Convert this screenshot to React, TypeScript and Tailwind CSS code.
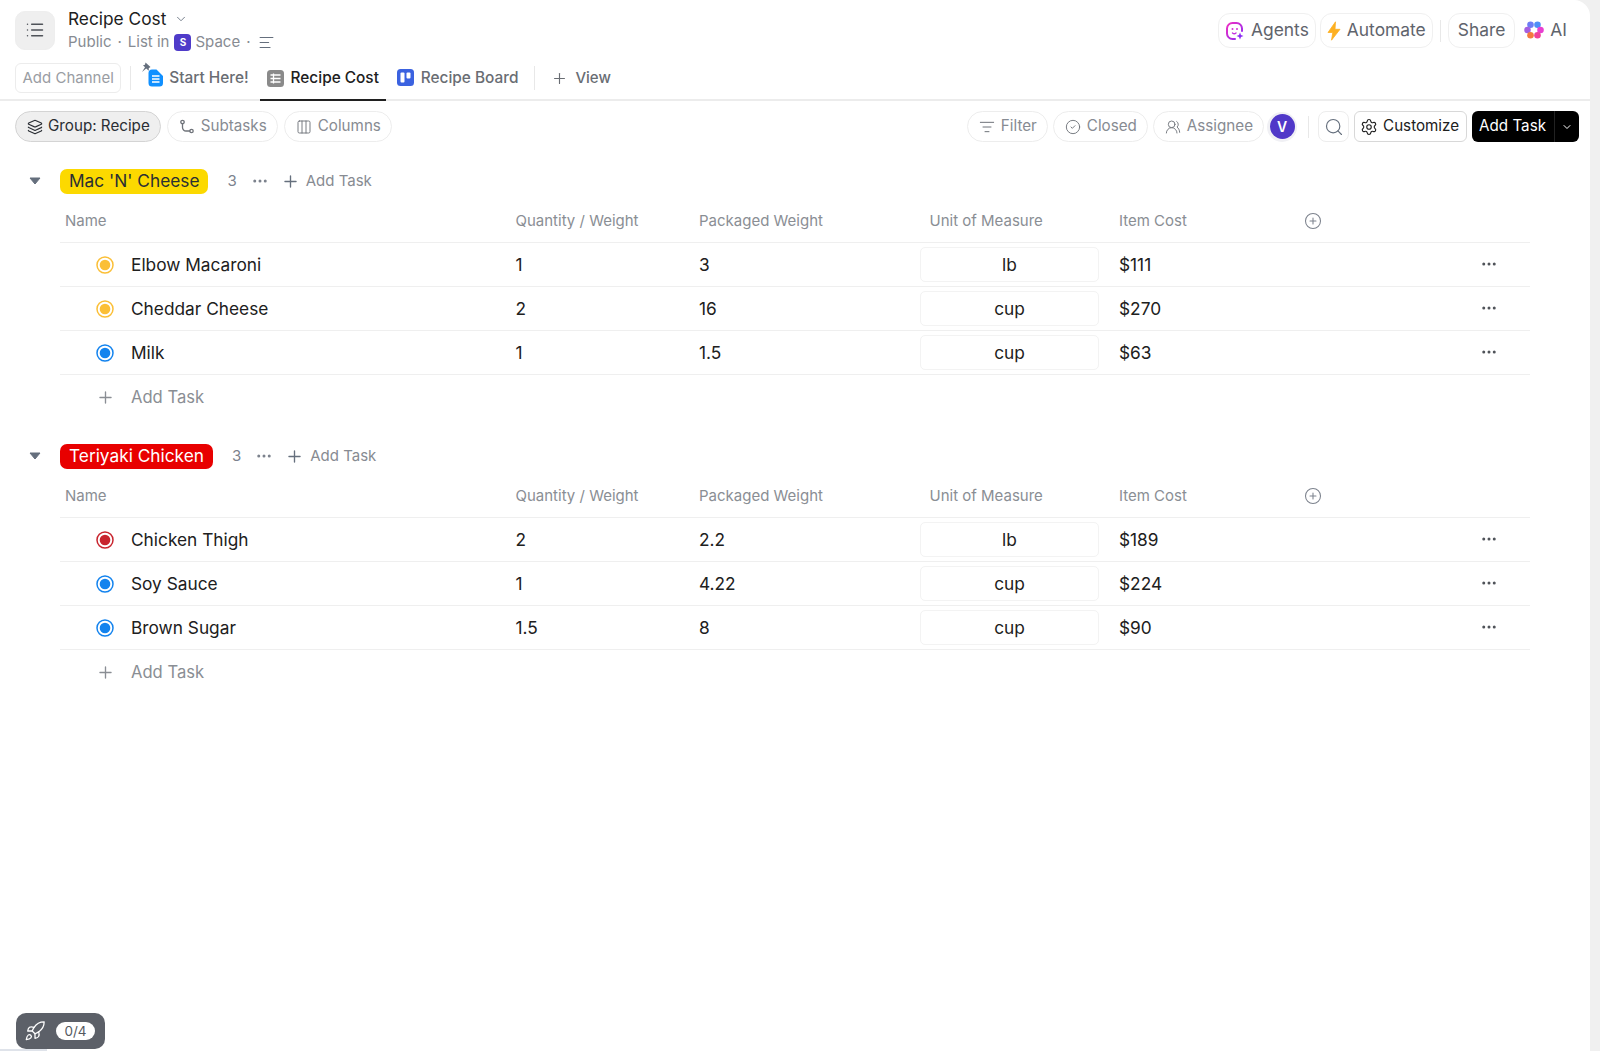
import {
  AlignLeft,
  ChevronDown,
  CircleCheck,
  CirclePlus,
  Columns3,
  Ellipsis,
  Layers,
  List,
  ListFilter,
  Plus,
  Rocket,
  Search,
  Settings,
  UsersRound,
} from 'lucide-react'

type Task = { name: string; color: string; qty: string; weight: string; unit: string; cost: string }

const YELLOW = '#fbbf37'
const BLUE = '#1383ee'
const RED = '#c8242e'

const groups: { name: string; pill: string; tasks: Task[] }[] = [
  {
    name: "Mac 'N' Cheese",
    pill: 'bg-[#fcd900] text-[#2a2e34]',
    tasks: [
      { name: 'Elbow Macaroni', color: YELLOW, qty: '1', weight: '3', unit: 'lb', cost: '$111' },
      { name: 'Cheddar Cheese', color: YELLOW, qty: '2', weight: '16', unit: 'cup', cost: '$270' },
      { name: 'Milk', color: BLUE, qty: '1', weight: '1.5', unit: 'cup', cost: '$63' },
    ],
  },
  {
    name: 'Teriyaki Chicken',
    pill: 'bg-[#e80000] text-white',
    tasks: [
      { name: 'Chicken Thigh', color: RED, qty: '2', weight: '2.2', unit: 'lb', cost: '$189' },
      { name: 'Soy Sauce', color: BLUE, qty: '1', weight: '4.22', unit: 'cup', cost: '$224' },
      { name: 'Brown Sugar', color: BLUE, qty: '1.5', weight: '8', unit: 'cup', cost: '$90' },
    ],
  },
]

function StatusDot({ color }: { color: string }) {
  return (
    <svg width="18" height="18" viewBox="0 0 18 18" className="shrink-0">
      <circle cx="9" cy="9" r="8" fill="none" stroke={color} strokeWidth="1.5" />
      <circle cx="9" cy="9" r="5.300" fill={color} />
    </svg>
  )
}

function AgentsIcon() {
  return (
    <svg width="20" height="20" viewBox="0 0 20 20" fill="none">
      <defs>
        <linearGradient id="agents" x1="0" y1="0" x2="1" y2="1">
          <stop offset="0" stopColor="#f02fc2" />
          <stop offset="1" stopColor="#8b2cf5" />
        </linearGradient>
      </defs>
      <path
        d="M10 18H7.500A5.500 5.500 0 0 1 2 12.500V7.500A5.500 5.500 0 0 1 7.500 2h4A5.500 5.500 0 0 1 17 7.500V10"
        stroke="url(#agents)"
        strokeWidth="2"
        strokeLinecap="round"
      />
      <circle cx="7.500" cy="8" r="1" fill="#d62fd8" />
      <circle cx="12" cy="8" r="1" fill="#d62fd8" />
      <path d="M7.500 12c1.200 1 2.300 1 3.500 0" stroke="#c42fe0" strokeWidth="1.400" strokeLinecap="round" />
      <path d="M15 11.500l1 2.500 2.500 1-2.500 1-1 2.500-1-2.500-2.500-1 2.500-1z" fill="#8b2cf5" />
    </svg>
  )
}

function BoltIcon() {
  return (
    <svg width="14" height="20" viewBox="0 0 14 20" className="shrink-0">
      <path d="M8.500 0.800L1 11.500h4.800L4.500 19.200 13 8.300H8z" fill="#fdb022" stroke="#fdb022" strokeWidth="0.800" strokeLinejoin="round" />
    </svg>
  )
}

function AiIcon() {
  return (
    <svg width="20" height="20" viewBox="0 0 20 20">
      <circle cx="6.500" cy="4.800" r="3.300" fill="#6d7cf5" />
      <circle cx="13.500" cy="4.800" r="3.300" fill="#4f8ef7" />
      <circle cx="3.500" cy="10" r="3.300" fill="#a45fe0" />
      <circle cx="16.500" cy="10" r="3.300" fill="#e83fd0" />
      <circle cx="6.500" cy="15.200" r="3.300" fill="#f5793f" />
      <circle cx="13.500" cy="15.200" r="3.300" fill="#f0409a" />
      <path d="M10 6.500l1 2.500 2.500 1-2.500 1-1 2.500-1-2.500-2.500-1 2.500-1z" fill="#fff" />
    </svg>
  )
}

function StartHereIcon() {
  return (
    <svg width="23" height="25" viewBox="0 0 23 25" className="mt-[-6px] shrink-0">
      <path d="M4.500 0.500l5 4.500-1.800 1.300.2 2.500-2.700-2.300L1 10l3-4.800L2 3.200l2-.4z" fill="#656f7d" />
      <path d="M7.500 11A3.500 3.500 0 0 1 11 7.500h4.500l6.500 6.500v7A3.500 3.500 0 0 1 18.500 24.500h-7.500A3.500 3.500 0 0 1 7.500 21z" fill="#1090ff" />
      <path d="M11 14h7.500M11 17h7.500M11 20h7.500" stroke="#fff" strokeWidth="1.600" />
    </svg>
  )
}

function TableIcon() {
  return (
    <svg width="17" height="17" viewBox="0 0 17 17" className="shrink-0">
      <rect width="17" height="17" rx="3.500" fill="#8a8a8a" />
      <path d="M3.500 5h10M3.500 8.500h10M3.500 12h10M6.500 3.500v10" stroke="#fff" strokeWidth="1.300" />
    </svg>
  )
}

function BoardIcon() {
  return (
    <svg width="17" height="17" viewBox="0 0 17 17" className="shrink-0">
      <rect width="17" height="17" rx="3.500" fill="#3b62e0" />
      <rect x="3.500" y="3.500" width="4" height="10" rx="1" fill="#fff" />
      <rect x="9.500" y="3.500" width="4" height="6" rx="1" fill="#fff" />
    </svg>
  )
}

function SubtasksIcon() {
  return (
    <svg width="16" height="16" viewBox="0 0 16 16" fill="none" stroke="currentColor" strokeWidth="1.300" className="shrink-0">
      <circle cx="3.500" cy="3" r="1.700" />
      <circle cx="12.500" cy="12" r="1.700" />
      <path d="M3.500 5v3.500A3.500 3.500 0 0 0 7 12h3.800" strokeLinecap="round" />
    </svg>
  )
}

function TopPill({ children }: { children: React.ReactNode }) {
  return (
    <div className="flex h-[35px] items-center gap-[6px] rounded-[12px] border border-[#f0f0f0] px-[6px] text-[17.4px] text-[#5f646c]">
      {children}
    </div>
  )
}

function ToolPill({ children, active }: { children: React.ReactNode; active?: boolean }) {
  return (
    <div
      className={
        active
          ? 'flex h-[31px] items-center gap-[5px] rounded-full border border-[#d4d4d4] bg-[#efefef] pl-[11px] pr-[10px] text-[15.2px] text-[#2a2e34]'
          : 'flex h-[31px] items-center gap-[6px] rounded-full border border-[#ededed] pl-[11px] pr-[10px] text-[15.2px] text-[#878b92] [&_svg]:text-[#6f737a]'
      }
    >
      {children}
    </div>
  )
}

function ColumnHeader() {
  return (
    <div className="ml-[60px] mr-[60px] flex h-[39px] items-center pb-[3px] text-[15px] text-[#8a8e94]">
      <div className="w-[455.5px] pl-[5px]">Name</div>
      <div className="w-[183.5px]">Quantity / Weight</div>
      <div className="w-[230.5px]">Packaged Weight</div>
      <div className="w-[189.5px]">Unit of Measure</div>
      <div className="w-[185px]">Item Cost</div>
      <CirclePlus size={18} strokeWidth={1.4} className="text-[#7c828d]" />
    </div>
  )
}

function TaskRow({ task }: { task: Task }) {
  return (
    <div className="ml-[60px] mr-[60px] flex h-[44px] items-center border-t border-[#efefef] text-[17.3px] text-[#202020]">
      <div className="flex w-[455.5px] items-center gap-[17px] pl-[36px]">
        <StatusDot color={task.color} />
        <span>{task.name}</span>
      </div>
      <div className="w-[183.5px]">{task.qty}</div>
      <div className="w-[221px]">{task.weight}</div>
      <div className="flex h-[35px] w-[179px] items-center justify-center rounded-[5px] border border-[#f3f3f3]">{task.unit}</div>
      <div className="ml-[20px] flex-1">{task.cost}</div>
      <Ellipsis size={18} strokeWidth={2} className="mb-[1px] mr-[32px] text-[#4f5359]" />
    </div>
  )
}

function Group({ group }: { group: (typeof groups)[number] }) {
  return (
    <section className="mb-[23px]">
      <div className="flex h-[26px] items-center">
        <svg width="12" height="8" viewBox="0 0 12 8" className="ml-[29px] shrink-0">
          <path d="M1 1h10L6 7z" fill="#656f7d" stroke="#656f7d" strokeLinejoin="round" />
        </svg>
        <div className={`ml-[19px] flex h-[25px] items-center rounded-[7px] px-[9px] text-[17.3px] ${group.pill}`}>{group.name}</div>
        <span className="ml-[19px] text-[15px] text-[#7c828d]">3</span>
        <Ellipsis size={18} strokeWidth={2} className="ml-[14px] text-[#7c828d]" />
        <Plus size={19} strokeWidth={1.7} className="ml-[12px] text-[#656f7d]" />
        <span className="ml-[6px] text-[15px] text-[#878b92]">Add Task</span>
      </div>
      <div className="mt-[9px]">
        <ColumnHeader />
      </div>
      {group.tasks.map(t => (
        <TaskRow key={t.name} task={t} />
      ))}
      <div className="ml-[60px] mr-[60px] flex h-[46px] items-center border-t border-[#efefef] pl-[36px] text-[16.6px] text-[#8a8e94]">
        <Plus size={19} strokeWidth={1.7} className="shrink-0 text-[#8a8e94]" />
        <span className="ml-[16px]">Add Task</span>
      </div>
    </section>
  )
}

export default function App() {
  return (
    <div className="relative flex h-[1051px] w-[1600px] overflow-hidden bg-[#f0f0f0] font-['Inter',sans-serif]">
      <main className="h-full w-[1590px] rounded-tr-[16px] bg-white">
        <header className="flex h-[101px] border-b-2 border-[#ececec]">
          <div className="flex-1 pl-[15px]">
            <div className="flex h-[60px] items-center">
              <div className="flex h-[39px] w-[40px] items-center justify-center rounded-[10px] border border-[#eee] bg-[#efefef]">
                <List size={20} strokeWidth={1.8} className="text-[#4f5359]" />
              </div>
              <div className="ml-[13px] flex flex-col pt-[1px]">
                <div className="flex h-[22px] items-center gap-[8px] text-[17.3px] text-[#202020]">
                  Recipe Cost
                  <ChevronDown size={14} strokeWidth={1.5} className="text-[#656f7d]" />
                </div>
                <div className="mt-[1px] flex h-[22px] items-center text-[15px] text-[#878b92]">
                  Public
                  <span className="mx-[6px]">·</span>
                  List in
                  <span className="ml-[5px] flex h-[17px] w-[17px] items-center justify-center rounded-[4px] bg-[#4f3bc9] text-[10px] font-bold text-white">S</span>
                  <span className="ml-[4px]">Space</span>
                  <span className="ml-[6px] mr-[7px]">·</span>
                  <AlignLeft size={17} strokeWidth={1.6} className="text-[#656f7d]" />
                </div>
              </div>
            </div>
            <div className="flex h-[41px] items-center pb-[5px] text-[15.4px]">
              <div className="flex h-[30px] items-center rounded-[6px] border border-[#ececec] px-[6.500px] text-[15px] text-[#9a9da3]">Add Channel</div>
              <div className="ml-[9px] h-[24px] w-px bg-[#e8e8e8]" />
              <div className="ml-[10px] flex items-center gap-[5px] text-[#696d73]">
                <StartHereIcon />
                <span className="font-medium">Start Here!</span>
              </div>
              <div className="mb-[-5px] ml-[11px] flex h-[41px] w-[126px] items-center justify-center gap-[7px] border-b-2 border-[#202020] pb-[3px] font-medium text-[#202020]">
                <TableIcon />
                <span>Recipe Cost</span>
              </div>
              <div className="ml-[11px] flex items-center gap-[7px] font-medium text-[#696d73]">
                <BoardIcon />
                <span>Recipe Board</span>
              </div>
              <div className="ml-[16px] h-[24px] w-px bg-[#e8e8e8]" />
              <div className="ml-[16px] flex items-center gap-[7px] text-[15px] font-medium text-[#696d73]">
                <Plus size={17} strokeWidth={1.6} />
                <span>View</span>
              </div>
            </div>
          </div>
          <div className="flex h-[60px] items-center gap-[4px] pr-[23px] pt-[1px]">
            <TopPill>
              <AgentsIcon />
              Agents
            </TopPill>
            <TopPill>
              <BoltIcon />
              Automate
            </TopPill>
            <div className="mx-[3px] h-[22px] w-px bg-[#e8e8e8]" />
            <div className="flex h-[35px] items-center rounded-[12px] border border-[#f0f0f0] px-[9px] text-[17.4px] text-[#5f646c]">Share</div>
            <div className="ml-[5px] flex items-center gap-[6px] text-[17.4px] text-[#5f646c]">
              <AiIcon />
              AI
            </div>
          </div>
        </header>

        <div className="flex h-[50px] items-center justify-between pl-[15px] pr-[11px] pt-[1px]">
          <div className="flex items-center gap-[6px]">
            <ToolPill active>
              <Layers size={16} strokeWidth={1.7} />
              Group: Recipe
            </ToolPill>
            <ToolPill>
              <SubtasksIcon />
              Subtasks
            </ToolPill>
            <ToolPill>
              <Columns3 size={16} strokeWidth={1.4} />
              Columns
            </ToolPill>
          </div>
          <div className="flex items-center gap-[5px]">
            <ToolPill>
              <ListFilter size={16} strokeWidth={1.5} />
              Filter
            </ToolPill>
            <ToolPill>
              <CircleCheck size={16} strokeWidth={1.4} />
              Closed
            </ToolPill>
            <ToolPill>
              <UsersRound size={16} strokeWidth={1.4} />
              Assignee
            </ToolPill>
            <div className="ml-[-2px] flex h-[30px] w-[30px] items-center justify-center rounded-full bg-[#f0f0f4]">
              <span className="flex h-[25px] w-[25px] items-center justify-center rounded-full bg-[#5038c8] text-[14px] font-semibold text-white">V</span>
            </div>
            <div className="ml-[6px] h-[22px] w-px bg-[#e8e8e8]" />
            <div className="ml-[4px] flex h-[31px] w-[31px] items-center justify-center rounded-[8px] border border-[#ededed]">
              <Search size={20} strokeWidth={1.4} className="text-[#656f7d]" />
            </div>
            <div className="flex h-[31px] items-center gap-[5px] rounded-[6px] border border-[#d8d8d8] pl-[5px] pr-[7px] text-[15.2px] text-[#202020]">
              <Settings size={18} strokeWidth={1.5} />
              Customize
            </div>
            <div className="flex h-[31px] items-center rounded-[6px] bg-black text-[15.2px] text-white">
              <span className="pl-[7px] pr-[8px]">Add Task</span>
              <span className="flex h-full w-[25px] items-center justify-center border-l border-[#222]">
                <ChevronDown size={12} />
              </span>
            </div>
          </div>
        </div>

        <div className="pt-[17px]">
          {groups.map(g => (
            <Group key={g.name} group={g} />
          ))}
        </div>
      </main>

      <div className="absolute bottom-0 left-0 h-[2px] w-[47px] bg-[#dfe3ea]" />
      <div className="absolute bottom-[2px] left-[16px] flex h-[36px] w-[89px] items-center gap-[10px] rounded-[10px] bg-[#5c6068] pl-[8px]">
        <Rocket size={22} strokeWidth={1.4} className="text-white" />
        <span className="flex h-[18px] w-[39px] items-center justify-center rounded-full bg-white text-[13.500px] text-[#55595f]">0/4</span>
      </div>
    </div>
  )
}
